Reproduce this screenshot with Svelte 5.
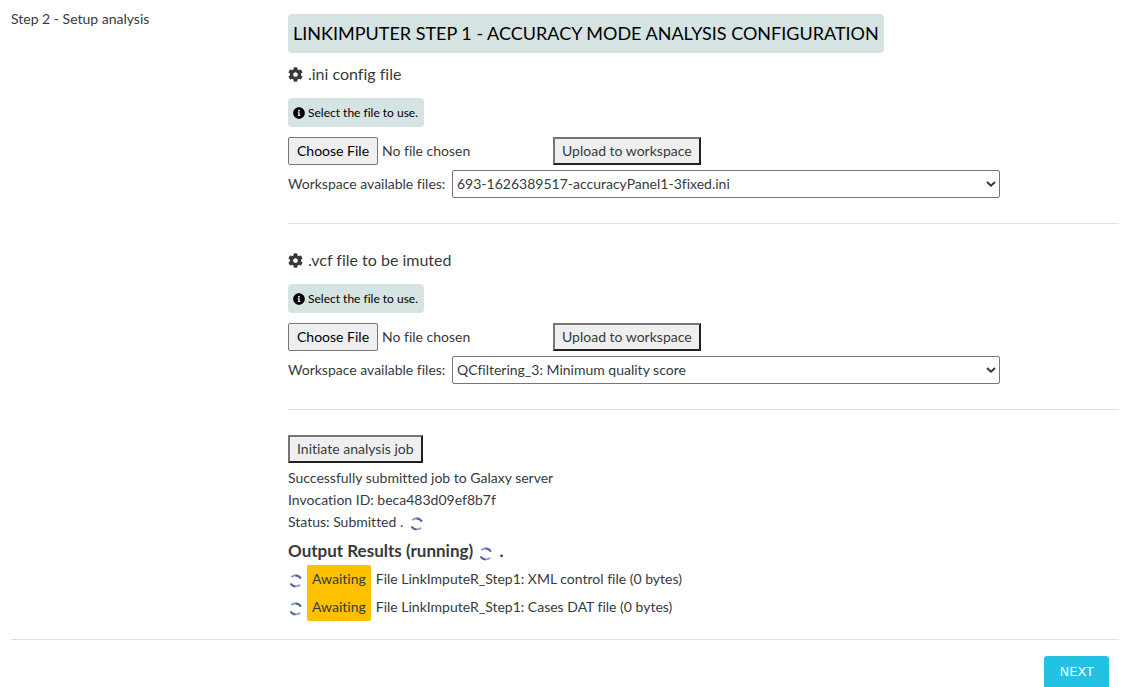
<script>
  const inputs = [
    { id: 'ini', title: '.ini config file', selected: '693-1626389517-accuracyPanel1-3fixed.ini' },
    { id: 'vcf', title: '.vcf file to be imuted', selected: 'QCfiltering_3: Minimum quality score' }
  ];
  const results = [
    'File LinkImputeR_Step1: XML control file (0 bytes)',
    'File LinkImputeR_Step1: Cases DAT file (0 bytes)'
  ];
</script>

{#snippet spinner()}
  <svg class="spinner" viewBox="0 0 14 14" aria-hidden="true">
    <g fill="none" stroke-width="1.8">
      <path d="M2.3 3.2C4.6 .8 8.6 .7 11.3 3.5" stroke="#8096bd" />
      <path d="M6.5 1.5C8.4 1.4 10.1 2.1 12 4.6" stroke="#4c6a9f" />
      <path d="M1.8 9.8C4.2 12.7 8.5 13.2 11.3 10.8" stroke="#90a3c5" />
      <path d="M1.5 9.4C2.7 11.3 4.5 12.3 6.5 12.4" stroke="#4c6a9f" />
    </g>
  </svg>
{/snippet}

<main>
  <div class="step">
    <p class="step-name">Step 2 - Setup analysis</p>
    <div class="content">
      <h1>LINKIMPUTER STEP 1 - ACCURACY MODE ANALYSIS CONFIGURATION</h1>

      {#each inputs as item}
        <section>
          <h2>
            <svg class="gear" viewBox="0 0 512 512" aria-hidden="true">
              <path fill="currentColor" d="M487.4 315.7l-42.6-24.6c4.3-23.2 4.3-47 0-70.2l42.6-24.6c4.9-2.8 7.1-8.6 5.5-14-11.1-35.6-30-67.8-54.7-94.6-3.8-4.1-10-5.1-14.8-2.3L380.8 110c-17.9-15.4-38.5-27.3-60.8-35.1V25.8c0-5.6-3.9-10.5-9.4-11.7-36.7-8.2-74.3-7.8-109.2 0-5.5 1.2-9.4 6.1-9.4 11.7V75c-22.2 7.9-42.8 19.8-60.8 35.1L88.7 85.5c-4.9-2.8-11-1.9-14.8 2.3-24.7 26.7-43.6 58.9-54.7 94.6-1.7 5.4.6 11.2 5.5 14L67.3 221c-4.3 23.2-4.3 47 0 70.2l-42.6 24.6c-4.9 2.8-7.1 8.6-5.5 14 11.1 35.6 30 67.8 54.7 94.6 3.8 4.1 10 5.1 14.8 2.3l42.6-24.6c17.9 15.4 38.5 27.3 60.8 35.1v49.2c0 5.6 3.9 10.5 9.4 11.7 36.7 8.2 74.3 7.8 109.2 0 5.5-1.2 9.4-6.1 9.4-11.7v-49.2c22.2-7.9 42.8-19.8 60.8-35.1l42.6 24.6c4.9 2.8 11 1.9 14.8-2.3 24.7-26.7 43.6-58.9 54.7-94.6 1.5-5.5-.7-11.3-5.6-14.1zM256 336c-44.1 0-80-35.9-80-80s35.9-80 80-80 80 35.9 80 80-35.9 80-80 80z" />
            </svg>
            {item.title}
          </h2>
          <label class="hint" for="{item.id}-upload">
            <svg class="info" viewBox="0 0 512 512" aria-hidden="true">
              <path fill="currentColor" d="M256 8C119 8 8 119 8 256s111 248 248 248 248-111 248-248S393 8 256 8zm0 110c23.2 0 42 18.8 42 42s-18.8 42-42 42-42-18.8-42-42 18.8-42 42-42zm56 254c0 6.6-5.4 12-12 12h-88c-6.6 0-12-5.4-12-12v-24c0-6.6 5.4-12 12-12h12v-64h-12c-6.6 0-12-5.4-12-12v-24c0-6.6 5.4-12 12-12h64c6.6 0 12 5.4 12 12v100h12c6.6 0 12 5.4 12 12v24z" />
            </svg>
            Select the file to use.
          </label>
          <div class="upload">
            <input id="{item.id}-upload" type="file" />
            <button class="plain" type="button">Upload to workspace</button>
          </div>
          <div class="choice">
            <label for="{item.id}-file">Workspace available files:</label>
            <div class="select">
              <select id="{item.id}-file"><option>{item.selected}</option></select>
              <svg viewBox="0 0 10 6" aria-hidden="true"><path d="M1 1l4 3.7 4-3.7" fill="none" stroke="currentColor" stroke-width="2" /></svg>
            </div>
          </div>
        </section>
      {/each}

      <button class="plain" type="button">Initiate analysis job</button>
      <div class="status">
        <p>Successfully submitted job to Galaxy server</p>
        <p>Invocation ID: beca483d09ef8b7f</p>
        <p>Status: Submitted . {@render spinner()}</p>
      </div>
      <h3>Output Results (running) {@render spinner()} .</h3>
      <ul>
        {#each results as result}
          <li>{@render spinner()}<span class="awaiting">Awaiting</span><span>{result}</span></li>
        {/each}
      </ul>
    </div>
  </div>
  <footer><button class="next" type="button">NEXT</button></footer>
</main>

<style>
  :global(body) { margin: 0; background: #fff; }
  main {
    padding: 0 10px 0 11px;
    font: 14px/22px Lato, sans-serif;
    font-variant-ligatures: none;
    color: #373a3c;
  }
  h1, h2, h3, p, ul { margin: 0; padding: 0; font-weight: 400; }
  button, input, select { font: inherit; font-variant-ligatures: none; color: inherit; box-sizing: border-box; }
  .step { display: grid; grid-template-columns: 1fr 3fr; padding-bottom: 18px; border-bottom: 1px solid #dfdfdf; }
  .step-name { padding-top: 8px; }
  .content { display: flex; flex-direction: column; align-items: flex-start; padding-top: 14px; }
  h1 {
    padding: 0 5px;
    font-size: 18px;
    line-height: 39px;
    color: #000;
    background: #d5e3e2;
    border-radius: 4px;
    margin-bottom: 9px;
  }
  section {
    align-self: stretch;
    display: flex;
    flex-direction: column;
    align-items: flex-start;
    padding-bottom: 25px;
    border-bottom: 1px solid #dfdfdf;
    margin-bottom: 24px;
  }
  section:last-of-type { margin-bottom: 25px; }
  h2 { display: flex; align-items: center; gap: 5px; font-size: 16px; line-height: 24px; margin-bottom: 12px; }
  .gear { width: 15px; height: 15px; }
  .hint {
    display: flex;
    align-items: center;
    gap: 3px;
    padding: 0 6px 0 5px;
    font-size: 12px;
    line-height: 29px;
    color: #000;
    background: #d5e3e2;
    border-radius: 4px;
    margin-bottom: 10px;
  }
  .info { width: 12px; height: 12px; }
  .upload { display: flex; margin-bottom: 5px; }
  input { width: 265px; height: 28px; line-height: 26px; }
  input::file-selector-button {
    box-sizing: border-box;
    height: 28px;
    padding: 0 8px;
    margin: 0 4px 0 0;
    font: inherit;
    color: #000;
    background: #efefef;
    border: 1px solid #767676;
    border-radius: 2px;
  }
  .plain {
    height: 28px;
    padding: 0 7px;
    background: #efefef;
    border: 2px solid;
    border-color: #767676 #212121 #212121 #767676;
  }
  .choice { align-self: stretch; display: flex; align-items: center; gap: 4px; }
  .choice label { min-width: 160px; }
  .select { position: relative; width: 66%; }
  select {
    display: block;
    width: 100%;
    height: 28px;
    padding: 0 20px 0 4px;
    appearance: none;
    background: #fff;
    border: 1px solid #767676;
    border-radius: 2px;
  }
  .select svg { position: absolute; right: 4px; top: 11px; width: 10px; height: 6px; pointer-events: none; }
  .status { padding: 4px 0 6px; }
  .spinner { width: 14px; height: 14px; margin: 0 3px; vertical-align: -4px; }
  h3 { font-size: 17px; line-height: 24px; font-weight: 700; margin-bottom: 2px; }
  h3 .spinner { margin: 0 2px; }
  ul { list-style: none; }
  li { display: flex; align-items: center; line-height: 28px; }
  li .spinner { margin: 3px 4px 0 1px; }
  .awaiting { padding: 0 5px; margin-right: 5px; background: #ffc000; }
  li:first-child .awaiting { border-radius: 2px 2px 0 0; }
  li:last-child .awaiting { border-radius: 0 0 2px 2px; }
  footer { display: flex; justify-content: flex-end; padding: 16px 10px 0 0; }
  .next {
    height: 31px;
    padding: 0 15px;
    font: 13px "DejaVu Sans", sans-serif;
    color: #fff;
    background: #23c1e2;
    border: 0;
    border-radius: 3px 3px 0 0;
  }
</style>
